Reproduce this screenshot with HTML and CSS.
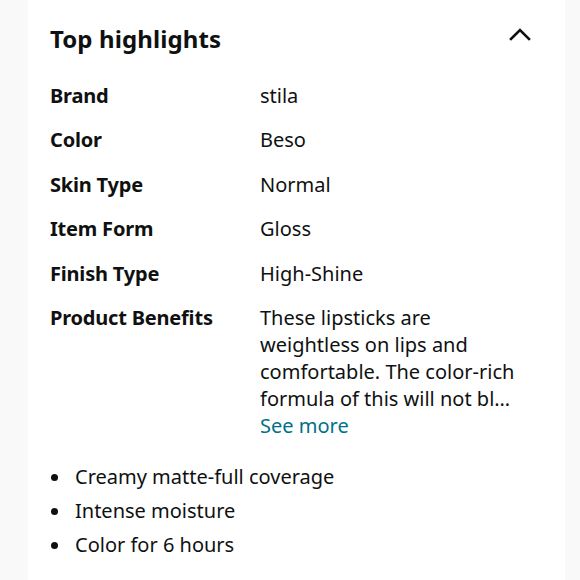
FILE: index.html
```html
<!DOCTYPE html>
<html>
<head>
<meta charset="utf-8">
<link rel="stylesheet" href="styles.css">
</head>
<body>
<div class="page">
  <section class="panel">
    <header class="head">
      <h2 class="title">Top highlights</h2>
      <svg class="chev" width="22" height="14" viewBox="0 0 22 14"><path d="M2 12 L11 3 L20 12" fill="none" stroke="#0f1111" stroke-width="2.6" stroke-linecap="square"/></svg>
    </header>
    <div class="specs">
      <div class="row"><div class="k">Brand</div><div class="v">stila</div></div>
      <div class="row"><div class="k">Color</div><div class="v">Beso</div></div>
      <div class="row"><div class="k">Skin Type</div><div class="v">Normal</div></div>
      <div class="row"><div class="k">Item Form</div><div class="v">Gloss</div></div>
      <div class="row"><div class="k">Finish Type</div><div class="v">High-Shine</div></div>
      <div class="row"><div class="k">Product Benefits</div><div class="v">These lipsticks are weightless on lips and comfortable. The color-rich formula of this will not bl…<br><a class="more">See more</a></div></div>
    </div>
    <ul class="bullets">
      <li>Creamy matte-full coverage</li>
      <li>Intense moisture</li>
      <li>Color for 6 hours</li>
    </ul>
  </section>
</div>
</body>
</html>
```
FILE: styles.css
```css
html, body { margin: 0; padding: 0; }
body { background: #f9f9f9; font-family: "Noto Sans", "Open Sans", sans-serif; color: #0f1111; }
.page { width: 580px; height: 580px; display: flex; }
.panel { margin-left: 28px; width: 537px; background: #fff; padding: 24px 0 0 22px; box-sizing: border-box; }
.head { display: flex; align-items: center; justify-content: space-between; padding-right: 34px; height: 30px; }
.title { margin: 0; font-size: 24px; font-weight: 700; line-height: 30px; letter-spacing: 0.1px; }
.chev { margin-top: -10px; }
.specs { margin-top: 27.5px; }
.row { display: flex; font-size: 20px; line-height: 27px; margin-bottom: 17.5px; }
.k { width: 210px; flex: none; font-weight: 700; letter-spacing: -0.2px; }
.v { width: 265px; }
.more { color: #007185; }
.bullets { list-style: none; margin: 20.5px 0 0; padding: 0; font-size: 20px; line-height: 34px; }
.bullets li { display: flex; align-items: center; }
.bullets li::before { content: ""; width: 7px; height: 7px; border-radius: 50%; background: #0f1111; margin: 1px 17px 0 1px; flex: none; }
```
